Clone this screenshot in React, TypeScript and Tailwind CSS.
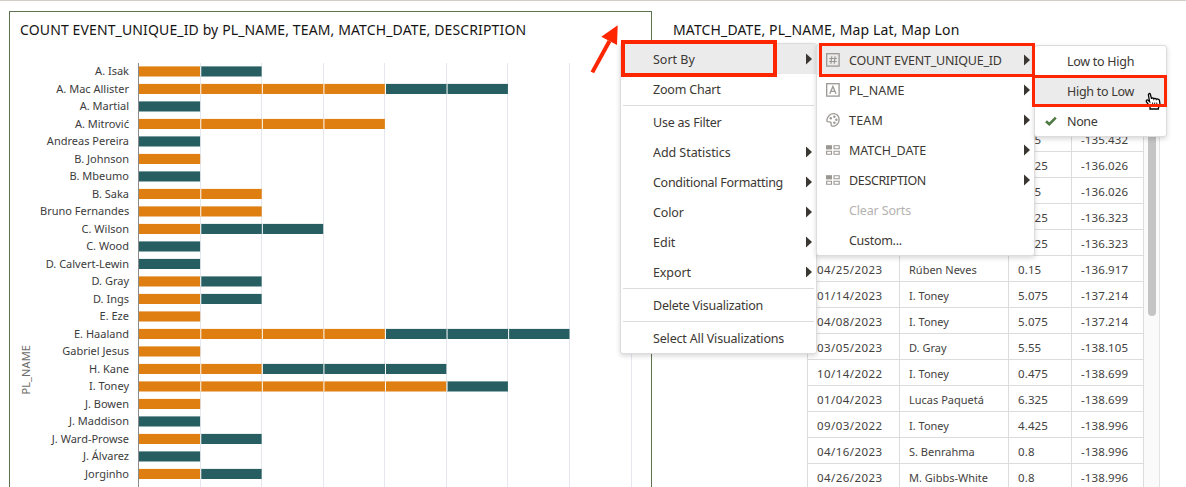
import React from 'react';

type Player = [name: string, orange: number, teal: number];

const players: Player[] = [
  ['A. Isak', 1, 1],
  ['A. Mac Allister', 4, 2],
  ['A. Martial', 0, 1],
  ['A. Mitrović', 4, 0],
  ['Andreas Pereira', 0, 1],
  ['B. Johnson', 1, 0],
  ['B. Mbeumo', 0, 1],
  ['B. Saka', 2, 0],
  ['Bruno Fernandes', 2, 0],
  ['C. Wilson', 1, 2],
  ['C. Wood', 0, 1],
  ['D. Calvert-Lewin', 0, 1],
  ['D. Gray', 1, 1],
  ['D. Ings', 1, 1],
  ['E. Eze', 1, 0],
  ['E. Haaland', 4, 3],
  ['Gabriel Jesus', 1, 0],
  ['H. Kane', 2, 3],
  ['I. Toney', 5, 1],
  ['J. Bowen', 1, 0],
  ['J. Maddison', 0, 1],
  ['J. Ward-Prowse', 1, 1],
  ['J. Álvarez', 0, 1],
  ['Jorginho', 1, 1],
];

const UNIT = 61.57;
const PITCH = 17.5;

const rows: string[][] = [
  ['', '', '5.55', '-135.432'],
  ['', '', '4.425', '-136.026'],
  ['', '', '5.55', '-136.026'],
  ['', '', '4.425', '-136.323'],
  ['', '', '4.425', '-136.323'],
  ['04/25/2023', 'Rúben Neves', '0.15', '-136.917'],
  ['01/14/2023', 'I. Toney', '5.075', '-137.214'],
  ['04/08/2023', 'I. Toney', '5.075', '-137.214'],
  ['03/05/2023', 'D. Gray', '5.55', '-138.105'],
  ['10/14/2022', 'I. Toney', '0.475', '-138.699'],
  ['01/04/2023', 'Lucas Paquetá', '6.325', '-138.699'],
  ['09/03/2022', 'I. Toney', '4.425', '-138.996'],
  ['04/16/2023', 'S. Benrahma', '0.8', '-138.996'],
  ['04/26/2023', 'M. Gibbs-White', '0.8', '-138.996'],
];

function Chart() {
  return (
    <svg width="510" height="425" viewBox="0 0 510 425" className="block shrink-0">
      {[1, 2, 3, 4, 5, 6, 7, 8].map((n) => (
        <rect key={n} x={Math.round(n * UNIT)} y="0" width="1" height="425" fill="#e4e8ee" />
      ))}
      <rect x="0" y="0" width="1" height="425" fill="#8b8b8b" />
      {players.map(([name, orange, teal], i) => (
        <g key={name}>
          {orange > 0 && (
            <rect
              x="1"
              y={3.4 + i * PITCH}
              width={orange * UNIT - 0.4}
              height="10.1"
              fill="#df7f12"
            />
          )}
          {teal > 0 && (
            <rect
              x={1 + orange * UNIT}
              y={3.4 + i * PITCH}
              width={teal * UNIT - 0.5}
              height="10.1"
              fill="#275e62"
            />
          )}
          {Array.from({ length: orange + teal - 1 }, (_, k) => (
            <rect
              key={k}
              x={(k + 1) * UNIT + 0.7}
              y={3.4 + i * PITCH}
              width="1"
              height="10.1"
              fill="#fff"
            />
          ))}
        </g>
      ))}
    </svg>
  );
}

function Caret() {
  return (
    <svg width="6" height="12" viewBox="0 0 6 12" className="block">
      <path d="M0 0.5 6 6 0 11.5Z" fill="#3a3632" />
    </svg>
  );
}

function HashIcon() {
  return (
    <svg width="14" height="14" viewBox="0 0 14 14" fill="none" stroke="#9b9792">
      <rect x="0.7" y="0.7" width="12.4" height="12.4" strokeWidth="1.3" />
      <path d="M5.8 3.2 4.9 10.8M9.1 3.2 8.2 10.8M3.2 5.5H10.9M3 8.5H10.7" strokeWidth="1.2" />
    </svg>
  );
}

function LetterIcon() {
  return (
    <svg width="14" height="14" viewBox="0 0 14 14" fill="none" stroke="#9b9792">
      <rect x="0.7" y="0.7" width="12.4" height="12.4" strokeWidth="1.3" />
      <path d="M3.8 10.8 6.9 3.4 10 10.8M4.9 8.4H8.9" strokeWidth="1.3" />
    </svg>
  );
}

function PaletteIcon() {
  return (
    <svg width="14" height="14" viewBox="0 0 14 14" fill="none">
      <path
        d="M3.4 2.2C5.6 .2 9.3 .1 11.5 2.3C13.6 4.4 13.6 8.2 11.7 10.7C10.2 12.7 7.4 13.6 5.6 12.8C4.2 12.1 5.7 10.4 4.9 9.3C4.1 8.2 2.4 9.3 1.3 8.5C.2 7.6 1.5 3.9 3.4 2.2Z"
        stroke="#9b9792"
        strokeWidth="1.3"
      />
      <g fill="#9b9792">
        <circle cx="4.8" cy="5.2" r="1.2" />
        <circle cx="8.4" cy="3.8" r="1.2" />
        <circle cx="10.4" cy="6.8" r="1.2" />
        <circle cx="8.4" cy="9.8" r="1.2" />
      </g>
    </svg>
  );
}

function GridIcon() {
  return (
    <svg width="14" height="14" viewBox="0 0 14 14" fill="none" stroke="#9b9792" strokeWidth="1.1">
      <rect x="0" y="2.2" width="6" height="4.2" fill="#9b9792" stroke="none" />
      <path d="M8 2.8H13.2V5.8H8ZM.6 8.3H5.5V11.3H.6ZM8 8.3H13.2V11.3H8Z" />
    </svg>
  );
}

function Separator() {
  return <div className="mx-[2px] my-px h-px bg-[#dddcda]" />;
}

function ViewItem({
  label,
  track,
  caret,
  active,
}: {
  label: string;
  track: string;
  caret?: boolean;
  active?: boolean;
}) {
  return (
    <div
      className={`flex h-[30px] items-center justify-between pr-[4px] pl-[32px] ${active ? 'bg-[#ebebeb]' : ''}`}
    >
      <span className={`pt-[2px] ${track}`}>{label}</span>
      {caret && <Caret />}
    </div>
  );
}

function SortItem({
  label,
  track,
  icon,
  active,
  disabled,
}: {
  label: string;
  track: string;
  icon?: React.ReactNode;
  active?: boolean;
  disabled?: boolean;
}) {
  return (
    <div
      className={`flex h-[30px] items-center pr-[4px] pl-[9px] ${active ? 'bg-[#ebebeb]' : ''} ${disabled ? 'text-[#b4b2b0]' : ''}`}
    >
      <div className="w-[23px] shrink-0">{icon}</div>
      <span className={`grow pt-[2px] ${track}`}>{label}</span>
      {icon && <Caret />}
    </div>
  );
}

const menuBox =
  'absolute border border-[#dcdcdc] bg-white text-[12.5px] whitespace-nowrap text-[#3c3833] shadow-[0_2px_5px_rgba(0,0,0,0.16)]';

export default function App() {
  return (
    <div className="relative h-[487px] w-[1186px] overflow-hidden border-t border-[#d3cdc7] bg-white font-['Noto_Sans',sans-serif]">
      <div className="flex">
        <section className="mt-[10px] ml-[9px] h-[500px] w-[643px] shrink-0 border border-[#5c7350]">
          <h2 className="mt-[8px] ml-[10px] h-[20px] text-[14px] leading-[20px] tracking-[0.13px] whitespace-nowrap text-[#161513]">
            COUNT EVENT_UNIQUE_ID by PL_NAME, TEAM, MATCH_DATE, DESCRIPTION
          </h2>
          <div className="mt-[23px] flex">
            <div className="flex w-[30px] shrink-0 items-end justify-center pr-[1px] pb-[94px] pl-[2px]">
              <span className="rotate-180 text-[11px] leading-[14px] tracking-[0.1px] text-[#6f6d6a] [writing-mode:vertical-rl]">
                PL_NAME
              </span>
            </div>
            <div className="-mt-[0.9px] w-[89px] shrink-0 text-right text-[11px] text-[#3c3c3c]">
              {players.map(([name]) => (
                <div key={name} className="h-[17.5px] leading-[17.5px] whitespace-nowrap">
                  {name}
                </div>
              ))}
            </div>
            <div className="w-[9px] shrink-0" />
            <Chart />
          </div>
        </section>

        <section className="ml-[21px] w-[500px] shrink-0">
          <h2 className="mt-[19px] h-[20px] text-[14px] leading-[20px] tracking-[0.13px] whitespace-nowrap text-[#161513]">
            MATCH_DATE, PL_NAME, Map Lat, Map Lon
          </h2>
          <div className="mt-[86px] ml-[134px] flex">
            <div className="border-l border-[#dcdcdc] text-[11px] text-[#444240]">
              {rows.map(([date, name, lat, lon], i) => (
                <div
                  key={i}
                  className="grid h-[26px] grid-cols-[92px_109px_63px_72px] border-b border-[#dcdcdc] leading-[27px] whitespace-nowrap [&>div]:h-[25px] [&>div]:border-r [&>div]:border-[#dcdcdc] [&>div]:pl-[9px]"
                >
                  <div className="text-[11.5px] tracking-[0.42px]">{date}</div>
                  <div>{name}</div>
                  <div className="text-[11.5px] tracking-[0.12px]">{lat}</div>
                  <div className="text-[11.5px] tracking-[0.12px]">{lon}</div>
                </div>
              ))}
            </div>
            <div className="flex w-[16px] justify-center border-r border-[#e3e3e3] bg-[#fafafa]">
              <div className="h-[190px] w-[8px] rounded-b-[4px] bg-[#c4c4c4]" />
            </div>
          </div>
        </section>
      </div>

      <div className={`${menuBox} top-[42px] left-[620px] w-[197px] rounded-[3px]`}>
        <ViewItem label="Sort By" track="" caret active />
        <ViewItem label="Zoom Chart" track="tracking-[-0.2px]" />
        <Separator />
        <ViewItem label="Use as Filter" track="tracking-[-0.22px]" />
        <ViewItem label="Add Statistics" track="tracking-[-0.06px]" caret />
        <ViewItem label="Conditional Formatting" track="tracking-[-0.28px]" caret />
        <ViewItem label="Color" track="tracking-[-0.15px]" caret />
        <ViewItem label="Edit" track="" caret />
        <ViewItem label="Export" track="tracking-[-0.1px]" caret />
        <Separator />
        <ViewItem label="Delete Visualization" track="tracking-[-0.25px]" />
        <Separator />
        <ViewItem label="Select All Visualizations" track="tracking-[-0.17px]" />
      </div>

      <div className={`${menuBox} top-[43px] left-[816px] w-[219px] rounded-[3px]`}>
        <SortItem
          label="COUNT EVENT_UNIQUE_ID"
          track="tracking-[-0.22px]"
          icon={<HashIcon />}
          active
        />
        <SortItem label="PL_NAME" track="" icon={<LetterIcon />} />
        <SortItem label="TEAM" track="tracking-[0.2px]" icon={<PaletteIcon />} />
        <SortItem label="MATCH_DATE" track="tracking-[-0.05px]" icon={<GridIcon />} />
        <SortItem label="DESCRIPTION" track="tracking-[-0.35px]" icon={<GridIcon />} />
        <SortItem label="Clear Sorts" track="tracking-[-0.15px]" disabled />
        <SortItem label="Custom..." track="tracking-[-0.3px]" />
      </div>

      <div className={`${menuBox} top-[44px] left-[1034px] w-[133px] rounded-[3px]`}>
        <div className="flex h-[30px] items-center pt-[2px] pl-[32px]">
          <span className="tracking-[-0.28px]">Low to High</span>
        </div>
        <div className="flex h-[30px] items-center bg-[#ebebeb] pt-[2px] pl-[32px]">
          <span className="tracking-[-0.28px]">High to Low</span>
        </div>
        <div className="flex h-[30px] items-center pl-[10px]">
          <svg width="12" height="10" viewBox="0 0 12 10" className="mr-[10px]">
            <path d="M1 5.2 4.3 8.2 10.8 1.6" fill="none" stroke="#4f7a43" strokeWidth="2.6" />
          </svg>
          <span className="pt-[2px] tracking-[-0.35px]">None</span>
        </div>
      </div>

      <svg className="absolute top-[91px] left-[1145px]" width="17" height="19" viewBox="0 0 17 19">
        <path
          d="M5 17V14.5L1.5 10C.6 8.4 2 7.4 3.1 8.3L4.6 9.7 3.4 3C3.2 1.3 5 1 5.4 2.5L6.6 6.8C6.8 5.6 8.6 5.6 8.9 6.9C9.4 6 11 6.2 11.3 7.4C12 6.7 14 7 14.4 8.2L14.9 11.5C15 13 13.4 14.4 13.3 17Z"
          fill="#fff"
          stroke="#000"
          strokeWidth="1.3"
        />
        <path d="M7.6 10.5V13.5M9.7 10.5V13.5M11.8 10.5V13.5" stroke="#000" strokeWidth="0.9" />
      </svg>

      <div className="absolute top-[39px] left-[621px] h-[37px] w-[156px] border-4 border-[#fe2600]" />
      <div className="absolute top-[42px] left-[819px] h-[34px] w-[216px] border-[3.5px] border-[#fe2600]" />
      <div className="absolute top-[74px] left-[1032px] h-[32px] w-[135px] border-[3px] border-[#fe2600]" />

      <svg className="absolute top-[23px] left-[588px]" width="32" height="52" viewBox="0 0 32 52">
        <path d="M4.3 48.4 21.5 17" stroke="#fe2600" strokeWidth="4" />
        <path d="M29.7 1.3 13.3 12.7 29 21Z" fill="#fe2600" />
      </svg>
    </div>
  );
}
